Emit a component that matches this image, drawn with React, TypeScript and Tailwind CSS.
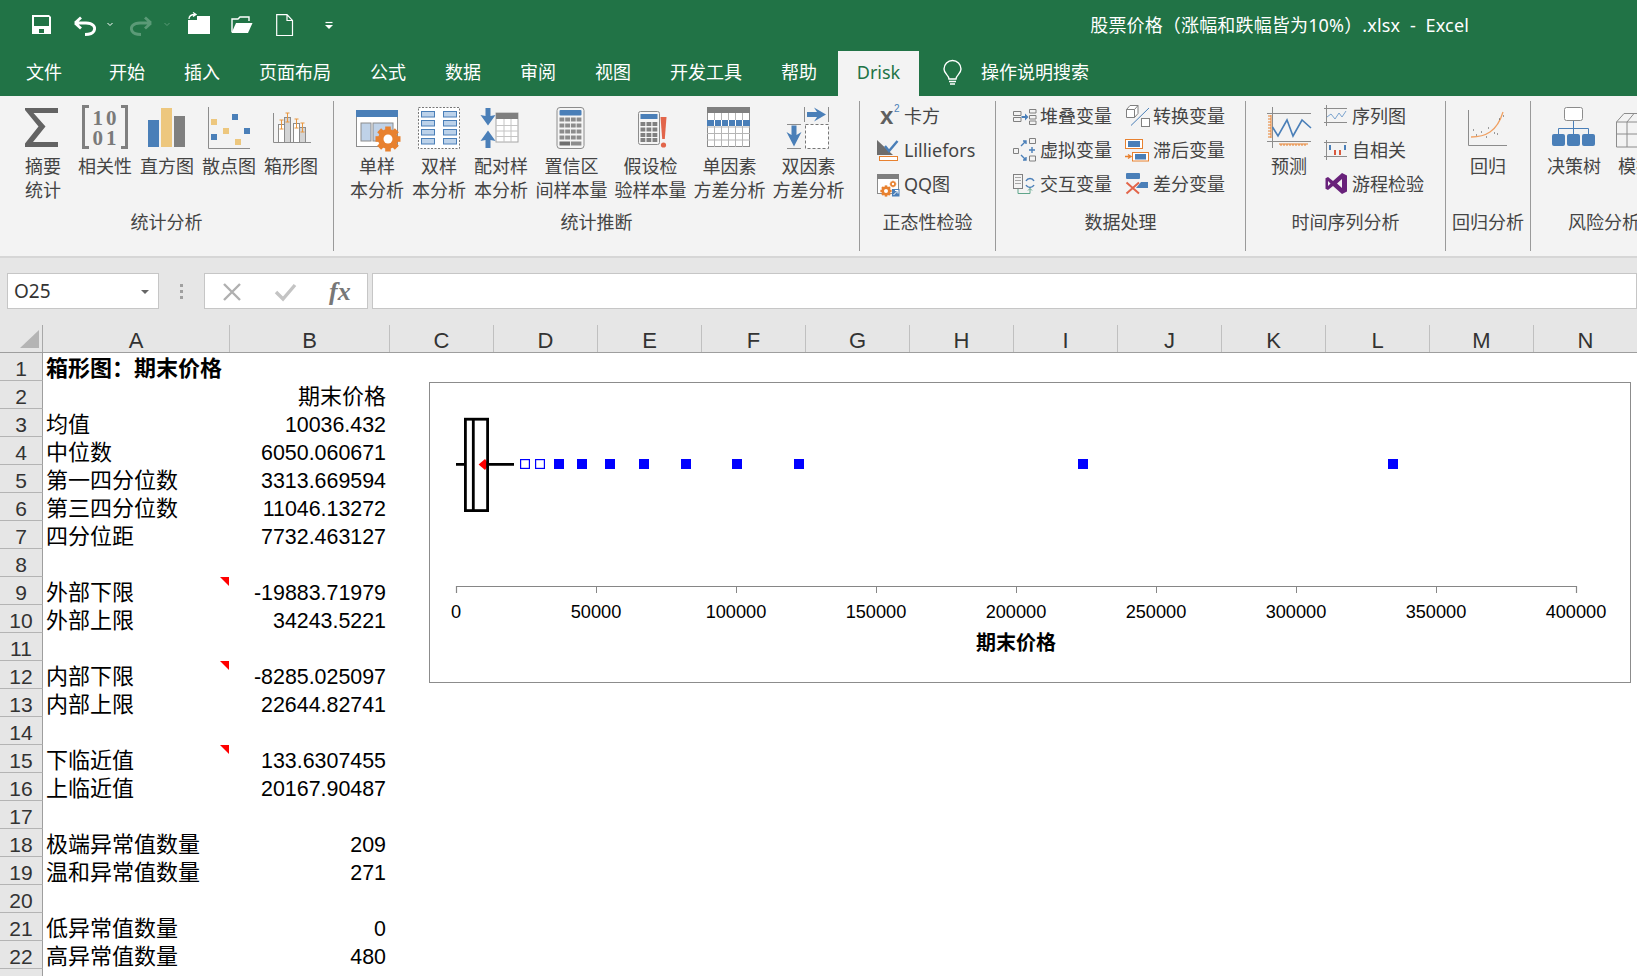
import type { ReactNode } from "react";

const BLUE = "#4a7fb8";
const GRAY = "#7f7f7f";
const ORANGE = "#e8812f";

// every icon is drawn in page pixels, the viewBox just cuts out its own slot
const Ico = ({ x, y, w, h, children }: { x: number; y: number; w: number; h: number; children?: ReactNode }) => (
  <svg width={w} height={h} viewBox={`${x} ${y} ${w} ${h}`} className="flex-none block overflow-hidden">
    {children}
  </svg>
);

const Gear = ({ cx, cy, r }: { cx: number; cy: number; r: number }) => (
  <g>
    {[0, 45, 90, 135, 180, 225, 270, 315].map((a) => (
      <rect key={a} x={cx - r * 0.28} y={cy - r * 1.25} width={r * 0.56} height={r * 0.6} fill={ORANGE} transform={`rotate(${a} ${cx} ${cy})`} />
    ))}
    <circle cx={cx} cy={cy} r={r} fill={ORANGE} />
    <circle cx={cx} cy={cy} r={r * 0.45} fill="#fff" />
  </g>
);

const Big = ({ x, w, cls, lines, children }: { x: number; w: number; cls: string; lines: string[]; children?: ReactNode }) => (
  <div className={`flex flex-col items-center flex-none ${cls}`}>
    <Ico x={x} y={96} w={w} h={58}>{children}</Ico>
    {lines.map((l) => (
      <div key={l} className="h-[24px] leading-[24px] text-[18px] whitespace-nowrap text-[#444]">{l}</div>
    ))}
  </div>
);

const Small = ({ x, y, w = 32, label, children }: { x: number; y: number; w?: number; label: string; children?: ReactNode }) => (
  <div className="flex items-center h-[34px]">
    <Ico x={x} y={y} w={w} h={34}>{children}</Ico>
    <span className="text-[18px] leading-[32px] mb-[2px] whitespace-nowrap text-[#444]">{label}</span>
  </div>
);

const Sep = () => <div className="flex-none w-[1px] h-[150px] mt-[5px] bg-[#9a9a9a]" />;

const GroupLabel = ({ text }: { text: string }) => (
  <div className="absolute left-0 right-0 top-[110px] h-[32px] leading-[32px] text-center text-[18px] whitespace-nowrap text-[#444]">{text}</div>
);

const tabs = ["开始", "插入", "页面布局", "公式", "数据", "审阅", "视图", "开发工具", "帮助"];

const columns = ["C", "D", "E", "F", "G", "H", "I", "J", "K", "L", "M", "N"];

const rows: { a?: string; b?: string; bold?: boolean; note?: boolean }[] = [
  { a: "箱形图：期末价格", bold: true },
  { b: "期末价格" },
  { a: "均值", b: "10036.432" },
  { a: "中位数", b: "6050.060671" },
  { a: "第一四分位数", b: "3313.669594" },
  { a: "第三四分位数", b: "11046.13272" },
  { a: "四分位距", b: "7732.463127" },
  {},
  { a: "外部下限", b: "-19883.71979", note: true },
  { a: "外部上限", b: "34243.5221" },
  {},
  { a: "内部下限", b: "-8285.025097", note: true },
  { a: "内部上限", b: "22644.82741" },
  {},
  { a: "下临近值", b: "133.6307455", note: true },
  { a: "上临近值", b: "20167.90487" },
  {},
  { a: "极端异常值数量", b: "209" },
  { a: "温和异常值数量", b: "271" },
  {},
  { a: "低异常值数量", b: "0" },
  { a: "高异常值数量", b: "480" },
  {},
];

const hollow = [520, 535];
const filled = [554, 577, 605, 639, 681, 732, 794, 1078, 1388];
const ticks = [0, 50000, 100000, 150000, 200000, 250000, 300000, 350000, 400000];

const Chart = () => (
  <div className="absolute left-[429px] top-[57px] w-[1202px] h-[301px] border border-[#8c8c8c] bg-white">
    <svg width={1200} height={299} viewBox="430 383 1200 299" className="block font-['Liberation_Sans','Noto_Sans_CJK_SC',sans-serif]">
      <path d="M485 459 L478.6 464.5 L485 470 L489 464.5 Z" fill="#ff0000" />
      <path d="M456 464.3 H465 M488 464.3 H514" stroke="#000" strokeWidth={2.8} />
      <rect x={465.4} y={419.2} width={22.2} height={91.4} fill="none" stroke="#000" strokeWidth={2.8} />
      <path d="M473.3 419 V511" stroke="#000" strokeWidth={2.8} />
      {hollow.map((x) => (
        <rect key={x} x={x + 0.6} y={459.6} width={8.8} height={8.8} fill="#fff" stroke="#0000ff" strokeWidth={1.2} />
      ))}
      {filled.map((x) => (
        <rect key={x} x={x} y={459} width={10} height={10} fill="#0000ff" />
      ))}
      <path d="M456.5 593 V586.5 H1576.5 V593" fill="none" stroke="#868686" strokeWidth={1.2} />
      {ticks.map((t, i) => (
        <g key={t}>
          <path d={`M${456.5 + i * 140} 586 V593`} stroke="#868686" strokeWidth={1} />
          <text x={456 + i * 140} y={617.5} textAnchor="middle" fontSize={18.2} fill="#000">{t}</text>
        </g>
      ))}
      <text x={1016} y={650} textAnchor="middle" fontSize={20} fontWeight={700} fill="#000">期末价格</text>
    </svg>
  </div>
);

export default function App() {
  return (
    <div className="relative w-[1637px] h-[976px] overflow-hidden bg-white font-['Noto_Sans','Noto_Sans_CJK_SC',sans-serif]">
      {/* title bar */}
      <div className="flex items-center h-[51px] bg-[#217346] pl-[26px] pr-[168px] text-white">
        <Ico x={26} y={0} w={40} h={51}>
          <path fillRule="evenodd" d="M32 15 H49 L51 17 V34 H32 Z M34 17 V26 H49 V17 Z M39 29 V33 H44 V29 Z" fill="#fff" />
        </Ico>
        <Ico x={66} y={0} w={36} h={51}>
          <path d="M75 23 L81 17.5 M75 23 L81 28.5 M75 23 H86 C93 23 96 27 94 31 C93 33 90 34.5 85 34.5" fill="none" stroke="#fff" strokeWidth={2.8} />
        </Ico>
        <Ico x={102} y={0} w={22} h={51}>
          <path d="M107.5 23 L110 25.5 L112.5 23" fill="none" stroke="#fff" strokeWidth={1} />
        </Ico>
        <Ico x={124} y={0} w={34} h={51}>
          <path d="M151 23 L145 17.5 M151 23 L145 28.5 M151 23 H140 C133 23 130 27 132 31 C133 33 136 34.5 141 34.5" fill="none" stroke="#5b9a77" strokeWidth={2.8} />
        </Ico>
        <Ico x={158} y={0} w={24} h={51}>
          <path d="M164.5 23 L167 25.5 L169.5 23" fill="none" stroke="#5b9a77" strokeWidth={1} />
        </Ico>
        <Ico x={182} y={0} w={44} h={51}>
          <path d="M188 20 H197 V16 H210 V34 H188 Z" fill="#fff" />
          <path d="M189 19 C189 15.5 191 14.5 195 14.5 M193 12.5 L196 14.5 L193 16.5" fill="none" stroke="#fff" strokeWidth={1.3} />
        </Ico>
        <Ico x={226} y={0} w={44} h={51}>
          <path d="M232 32 V19 H238 L240 17 H249 V21" fill="none" stroke="#fff" strokeWidth={1.4} />
          <path d="M236 23 H252.5 L248 33 H231.5 Z" fill="#fff" />
        </Ico>
        <Ico x={270} y={0} w={50} h={51}>
          <path d="M276.7 14.7 H287 L292.5 20.5 V35.5 H276.7 Z M287 14.7 V20.5 H292.5" fill="none" stroke="#fff" strokeWidth={1.2} />
        </Ico>
        <Ico x={320} y={0} w={20} h={51}>
          <path d="M325.5 22.5 H332.5" stroke="#fff" strokeWidth={1.2} />
          <path d="M325 25 H333 L329 29 Z" fill="#fff" />
        </Ico>
        <div className="ml-auto text-[18px] tracking-[0.16px] whitespace-nowrap">股票价格（涨幅和跌幅皆为10%）.xlsx&nbsp; -&nbsp; Excel</div>
      </div>

      {/* tabs */}
      <div className="flex items-center h-[45px] bg-[#217346] pl-[26px] text-[18px] text-white">
        <span className="mr-[47px] -mt-[2px]">文件</span>
        <div className="flex gap-[39px] -mt-[2px]">
          {tabs.map((t) => (
            <span key={t} className="whitespace-nowrap">{t}</span>
          ))}
        </div>
        <div className="ml-[21px] flex items-center justify-center w-[81px] h-[45px] pb-[2px] bg-[#f3f3f3] text-[#217346]">Drisk</div>
        <div className="ml-[17px]">
          <Ico x={936} y={51} w={45} h={45}>
            <path d="M949 79 C949 75 944 74 944 69 A8.5 8.5 0 0 1 961 69 C961 74 956 75 956 79 Z M949 81.5 H956 M950 84 H955" fill="none" stroke="#fff" strokeWidth={1.4} />
          </Ico>
        </div>
        <span className="-mt-[2px] whitespace-nowrap">操作说明搜索</span>
      </div>

      {/* ribbon */}
      <div className="flex h-[162px] bg-[#f3f3f3] border-b-2 border-[#d6d6d6] overflow-hidden">
        <div className="relative flex flex-none w-[333px] pl-[12px]">
          <Big x={12} w={62} cls="w-[62px]" lines={["摘要", "统计"]}>
            <path d="M25 108 H58 V113 H33.5 L45.5 126.5 L33 142 H58 V147 H25 V143.5 L38.5 126.5 L25 110 Z" fill="#636363" />
          </Big>
          <Big x={74} w={62} cls="w-[62px]" lines={["相关性"]}>
            <path d="M89 106.5 H83.5 V147.5 H89 M121 106.5 H126.5 V147.5 H121" fill="none" stroke={GRAY} strokeWidth={3} />
            <text x={106} y={125} textAnchor="middle" fontSize={21} fontWeight={700} fill="#7a7a7a" className="font-['Liberation_Serif',serif]" letterSpacing={3}>10</text>
            <text x={106} y={145} textAnchor="middle" fontSize={21} fontWeight={700} fill="#7a7a7a" className="font-['Liberation_Serif',serif]" letterSpacing={3}>01</text>
          </Big>
          <Big x={136} w={62} cls="w-[62px]" lines={["直方图"]}>
            <rect x={148} y={120} width={11} height={27} fill={BLUE} />
            <rect x={161} y={108} width={11} height={39} fill="#edc77e" />
            <rect x={174} y={116} width={11} height={31} fill={GRAY} />
          </Big>
          <Big x={198} w={62} cls="w-[62px]" lines={["散点图"]}>
            <path d="M208.5 107 V148.5 H250" fill="none" stroke="#8c8c8c" />
            <rect x={211} y={119} width={6} height={6} fill="#edc77e" />
            <rect x={232} y={114} width={6} height={6} fill={BLUE} />
            <rect x={223} y={128} width={6} height={6} fill="#edc77e" />
            <rect x={244} y={128} width={6} height={6} fill={BLUE} />
            <rect x={211} y={134} width={6} height={6} fill={BLUE} />
            <rect x={235} y={139} width={6} height={6} fill="#edc77e" />
          </Big>
          <Big x={260} w={62} cls="w-[62px]" lines={["箱形图"]}>
            <path d="M273.5 113 V142.5 H311" fill="none" stroke="#8c8c8c" />
            <rect x={278.5} y={124.5} width={6} height={18} fill="#fff" stroke="#8c8c8c" />
            <rect x={284.5} y={117.5} width={6} height={25} fill="#d4d4d4" stroke="#8c8c8c" />
            <rect x={293.5} y={123.5} width={6} height={19} fill="#fff" stroke="#8c8c8c" />
            <rect x={299.5} y={127.5} width={6} height={15} fill="#d4d4d4" stroke="#8c8c8c" />
            <path d="M281.5 120 V129 M279.5 120 H283.5 M279.5 129 H283.5 M287.5 113 V122 M285.5 113 H289.5 M285.5 122 H289.5 M296.5 119 V128 M294.5 119 H298.5 M294.5 128 H298.5 M302.5 123 V132 M300.5 123 H304.5 M300.5 132 H304.5" fill="none" stroke="#e8963f" />
          </Big>
          <GroupLabel text="统计分析" />
        </div>
        <Sep />

        <div className="relative flex flex-none w-[525px] pl-[12px]">
          <Big x={346} w={62} cls="w-[62px]" lines={["单样", "本分析"]}>
            <rect x={356.5} y={110.5} width={41} height={36} fill="#fff" stroke="#8c8c8c" />
            <rect x={356} y={110} width={42} height={7} fill={BLUE} />
            <rect x={361} y={123} width={10} height={18} fill="#bfd2e8" stroke="#8c8c8c" />
            <rect x={373} y={123} width={20} height={18} fill="#bfd2e8" stroke="#8c8c8c" />
            <Gear cx={388} cy={139} r={10} />
          </Big>
          <Big x={408} w={62} cls="w-[62px]" lines={["双样", "本分析"]}>
            <rect x={418.5} y={107.5} width={41} height={41} fill="#fff" stroke="#777" strokeDasharray="2 1.5" />
            {[111, 120, 129, 138].map((y) => (
              <g key={y}>
                <rect x={421.5} y={y + 0.5} width={13} height={5.5} fill="#bcd2ea" stroke={BLUE} />
                <rect x={443.5} y={y + 0.5} width={13} height={5.5} fill="#bcd2ea" stroke={BLUE} />
              </g>
            ))}
          </Big>
          <Big x={470} w={62} cls="w-[62px]" lines={["配对样", "本分析"]}>
            <rect x={496} y={113} width={22} height={29} fill="#fff" stroke="#a6a6a6" />
            <rect x={496} y={113} width={22} height={6} fill={GRAY} />
            <path d="M496 125.5 H518 M496 131 H518 M496 136.5 H518 M504 119 V142 M511 119 V142" stroke="#c4c4c4" />
            <path d="M485.5 108 H490.5 V116 L495.5 115 L488 125.5 L480.5 115 L485.5 116 Z M485.5 148 H490.5 V140 L495.5 141 L488 130.5 L480.5 141 L485.5 140 Z" fill={BLUE} />
          </Big>
          <Big x={532} w={79} cls="w-[79px]" lines={["置信区", "间样本量"]}>
            <rect x={557} y={107.5} width={27} height={41} rx={3} fill="#f5f5f5" stroke="#8c8c8c" />
            <rect x={559.5} y={110} width={22} height={5.5} rx={1} fill={BLUE} />
            {[117.5, 123.5, 129.5, 135.5].map((y) =>
              [559.5, 565.2, 570.9, 576.6].map((x) => <rect key={`${x}-${y}`} x={x} y={y} width={4.8} height={4} fill="#8c8c8c" />)
            )}
            <rect x={559.5} y={141.5} width={10.5} height={4} fill="#6f6f6f" />
            <rect x={570.9} y={141.5} width={10.5} height={4} fill="#8c8c8c" />
          </Big>
          <Big x={611} w={79} cls="w-[79px]" lines={["假设检", "验样本量"]}>
            <rect x={638.5} y={111.5} width={21} height={33} rx={2} fill="#f5f5f5" stroke="#8c8c8c" />
            <rect x={640.5} y={114} width={17} height={5} fill={BLUE} />
            {[122, 127.5, 133, 138].map((y) =>
              [640.5, 646.5, 652.5].map((x) => <rect key={`${x}-${y}`} x={x} y={y} width={4.8} height={4} fill="#808080" />)
            )}
            <path d="M660.5 117 H666.5 L664.8 139 H662.2 Z" fill="#e2654a" />
            <circle cx={663.5} cy={145} r={2.6} fill="#e2654a" />
          </Big>
          <Big x={690} w={79} cls="w-[79px]" lines={["单因素", "方差分析"]}>
            <rect x={707.5} y={107.5} width={42} height={39} fill="#fff" stroke="#8c8c8c" />
            <path d="M707 127 H750 M707 133.5 H750 M707 140 H750 M714.5 107 V147 M721.5 107 V147 M728.5 107 V147 M735.5 107 V147 M742.5 107 V147" stroke="#b5b5b5" />
            <rect x={707} y={120} width={43} height={6} fill={BLUE} />
            <path d="M714.5 120 V126 M721.5 120 V126 M728.5 120 V126 M735.5 120 V126 M742.5 120 V126" stroke="#fff" />
            <rect x={707} y={107} width={43} height={6} fill={GRAY} />
          </Big>
          <Big x={769} w={79} cls="w-[79px]" lines={["双因素", "方差分析"]}>
            <path d="M804.5 107 V122 M828.5 107 V122 M787 124.5 H801 M787 148.5 H801" stroke="#8c8c8c" />
            <path d="M807 112 H817 L814 107.5 L826 114.5 L814 121.5 L817 117 H807 Z" fill={BLUE} />
            <path d="M791.5 125.5 H796.5 V135 L801.5 132 L794 146.5 L786.5 132 L791.5 135 Z" fill={BLUE} />
            <rect x={805.5} y={124.5} width={23} height={24} fill="#fff" stroke="#777" strokeDasharray="3 2" />
          </Big>
          <GroupLabel text="统计推断" />
        </div>
        <Sep />

        <div className="relative flex flex-col flex-none w-[135px] pt-[4px] pl-[13px]">
          <Small x={873} y={100} w={31} label="卡方">
            <text x={880} y={124} fontSize={24} fontWeight={700} fill="#5f5f5f" className="font-['Liberation_Sans',sans-serif]">x</text>
            <text x={894} y={112} fontSize={10} fill={BLUE} className="font-['Liberation_Sans',sans-serif]">2</text>
          </Small>
          <Small x={873} y={134} w={31} label="Lilliefors">
            <path d="M877 140 V155 H893 Z" fill="#6d6d6d" />
            <path d="M885 146 L889 151 L897.5 141" fill="none" stroke={BLUE} strokeWidth={2.4} />
            <rect x={879.5} y={156.5} width={18} height={4} fill="#fff" stroke={ORANGE} />
          </Small>
          <Small x={873} y={168} w={31} label="QQ图">
            <rect x={877.5} y={174.5} width={21} height={19} fill="#fff" stroke="#8c8c8c" />
            <rect x={877} y={174} width={22} height={5} fill={GRAY} />
            <Gear cx={886} cy={191} r={4.5} />
            <Gear cx={893} cy={184} r={2.6} />
            <rect x={892} y={189} width={7.5} height={7.5} fill={BLUE} />
            <path d="M893.5 195 L898 190.5 M895 190.5 H898 V193.5" fill="none" stroke="#fff" />
          </Small>
          <GroupLabel text="正态性检验" />
        </div>
        <Sep />

        <div className="relative flex flex-none w-[249px] pt-[4px] pl-[12px]">
          <div className="flex flex-col">
            <Small x={1008} y={100} label="堆叠变量">
              <path d="M1013.5 111.5 H1021 V115.5 H1013.5 Z M1013.5 117.5 H1021 V121.5 H1013.5 Z M1029.5 109.5 H1036 V113 H1029.5 Z M1029.5 115.5 H1036 V119 H1029.5 Z M1029.5 121 H1036 V124.5 H1029.5 Z" fill="none" stroke="#808080" />
              <path d="M1021.5 116 H1025 V113.5 L1028.5 117 L1025 120.5 V118 H1021.5 Z" fill={BLUE} />
            </Small>
            <Small x={1008} y={134} label="虚拟变量">
              <path d="M1013.5 148.5 H1018.5 V153.5 H1013.5 Z M1029.5 138.5 H1035.5 V143.5 H1029.5 Z M1029.5 156 H1035.5 V161 H1029.5 Z" fill="none" stroke="#808080" />
              <path d="M1021 146 L1026 141 M1023 141 H1026 V144 M1021 155 L1026 160 M1023 160 H1026 V157 M1029 150 H1035 M1032 147 V153" fill="none" stroke={BLUE} strokeWidth={1.4} />
            </Small>
            <Small x={1008} y={168} label="交互变量">
              <rect x={1013.5} y={174.5} width={9} height={14} fill="#f3f3f3" stroke="#808080" />
              <path d="M1015 177.5 H1021 M1015 180.5 H1021 M1015 183.5 H1021" stroke="#a6a6a6" />
              <path d="M1026 181 A4.5 4.5 0 0 1 1034 181 M1034 185 A4.5 4.5 0 0 1 1026 185" fill="none" stroke={BLUE} strokeWidth={1.5} />
              <path d="M1018 189 V193.5 H1030 V188.5 M1028 190.5 L1030 188.5 L1032 190.5" fill="none" stroke="#5fa58a" />
            </Small>
          </div>
          <div className="flex flex-col ml-[9px]">
            <Small x={1121} y={100} label="转换变量">
              <path d="M1126.5 109.5 H1134.5 V117.5 H1126.5 Z M1126.5 109.5 L1130 105.5 H1138 V113.5 L1134.5 117.5 M1134.5 109.5 L1138 105.5" fill="#fff" stroke="#808080" />
              <path d="M1149 108 L1131 125.5" stroke={BLUE} />
              <rect x={1141.5} y={118.5} width={8} height={8} fill="#fff" stroke="#808080" />
            </Small>
            <Small x={1121} y={134} label="滞后变量">
              <rect x={1125.5} y={139.5} width={17} height={9} fill="#fff" stroke={ORANGE} />
              <rect x={1128} y={141} width={12} height={6} fill={BLUE} />
              <rect x={1132.5} y={152.5} width={16} height={8.5} fill="#fff" stroke={ORANGE} />
              <rect x={1135} y={154} width={11} height={5.5} fill={BLUE} />
              <path d="M1125 156.5 H1130 M1128 154.5 L1131 156.5 L1128 158.5" fill="none" stroke={ORANGE} strokeWidth={1.4} />
            </Small>
            <Small x={1121} y={168} label="差分变量">
              <rect x={1126} y={173} width={14} height={6} rx={1} fill={BLUE} />
              <path d="M1141 182 H1148 V188 H1136 Z" fill={BLUE} />
              <path d="M1126.5 182.5 L1139 193.5 M1139 182.5 L1126.5 193.5" stroke="#e2654a" strokeWidth={2} />
            </Small>
          </div>
          <GroupLabel text="数据处理" />
        </div>
        <Sep />

        <div className="relative flex flex-none w-[199px] pl-[12px]">
          <Big x={1258} w={62} cls="w-[62px]" lines={["预测"]}>
            <path d="M1267 113.5 H1311 M1267 141.5 H1311 M1272.5 107 V148" fill="none" stroke="#8c8c8c" />
            <path d="M1272.5 127 L1278 136 L1287 120 L1293 136 L1302 120 L1311 128" fill="none" stroke={BLUE} strokeWidth={1.6} />
            <path d="M1271 115 V138 M1268 116 H1271 M1268 119 H1271 M1268 122 H1271 M1268 125 H1271 M1268 128 H1271 M1268 131 H1271 M1268 134 H1271 M1268 137 H1271" fill="none" stroke={ORANGE} />
            <path d="M1279 144 H1308 M1281 144 V146 M1284 144 V146 M1287 144 V146 M1290 144 V146 M1293 144 V146 M1296 144 V146 M1299 144 V146 M1302 144 V146 M1305 144 V146" fill="none" stroke={ORANGE} />
          </Big>
          <div className="flex flex-col pt-[4px]">
            <Small x={1320} y={100} label="序列图">
              <path d="M1324 108.5 H1347 M1324 122.5 H1347 M1326.5 105 V126" fill="none" stroke="#8c8c8c" />
              <path d="M1327 117 L1331 114 L1335 119 L1339 113 L1342 117 L1346 111" fill="none" stroke="#7ba4cf" />
            </Small>
            <Small x={1320} y={134} label="自相关">
              <path d="M1324 142.5 H1347 M1324 156.5 H1347 M1326.5 140 V160" fill="none" stroke="#8c8c8c" />
              <rect x={1329} y={145} width={2} height={5} fill={BLUE} />
              <rect x={1334} y={150} width={2} height={5} fill="#d9593d" />
              <rect x={1339} y={150} width={2} height={5} fill="#d9593d" />
              <rect x={1344} y={145} width={2} height={5} fill={BLUE} />
            </Small>
            <Small x={1320} y={168} label="游程检验">
              <path fillRule="evenodd" d="M1342 173 L1347 175.5 V191.5 L1342 194 L1333 186 L1328 190 L1325.5 188.7 V178.3 L1328 177 L1333 181 Z M1342 179 L1337 183.5 L1342 188 Z M1328 181 V186 L1330.5 183.5 Z" fill="#68217a" />
            </Small>
          </div>
          <GroupLabel text="时间序列分析" />
        </div>
        <Sep />

        <div className="relative flex flex-none w-[84px] pl-[11px]">
          <Big x={1457} w={62} cls="w-[62px]" lines={["回归"]}>
            <path d="M1468.5 110 V145.5 H1507" fill="none" stroke="#8c8c8c" />
            <path d="M1471 137 C1485 137 1497 132 1503 112" fill="none" stroke="#f0a163" strokeWidth={1.3} />
            <path d="M1473 130 h1 M1476 135 h1 M1481 132 h1 M1488 128 h1 M1486 137 h1 M1497 134 h1 M1499 119 h1 M1503 116 h1 M1494 133 h1" stroke="#444" />
          </Big>
          <GroupLabel text="回归分析" />
        </div>
        <Sep />

        <div className="relative flex flex-none w-[146px] pl-[12px]">
          <Big x={1543} w={62} cls="w-[62px]" lines={["决策树"]}>
            <rect x={1564.5} y={107.5} width={18} height={13} rx={2} fill="#fff" stroke="#8c8c8c" />
            <path d="M1573.5 121 V128.5 M1558.5 134 V128.5 H1588.5 V134 M1573.5 128.5 V134" fill="none" stroke={BLUE} />
            <rect x={1552} y={134} width={13} height={12} rx={2} fill={BLUE} />
            <rect x={1567} y={134} width={13} height={12} rx={2} fill={BLUE} />
            <rect x={1582} y={134} width={13} height={12} rx={2} fill={BLUE} />
          </Big>
          <Big x={1605} w={62} cls="w-[62px]" lines={["模拟"]}>
            <path d="M1616.5 122 L1624 113.5 H1650 M1616.5 122 V147 H1650 M1616.5 122 H1650 M1616.5 134 H1650 M1627 122 V147 M1627 122 L1634 113.5" fill="none" stroke="#8c8c8c" />
          </Big>
          <GroupLabel text="风险分析" />
        </div>
      </div>

      {/* formula bar */}
      <div className="flex h-[67px] pt-[15px] bg-[#e6e6e6] items-start">
        <div className="flex items-center justify-between w-[152px] h-[36px] ml-[7px] px-[6px] pt-[1px] bg-white border border-[#c6c6c6] text-[19px] text-[#333]">
          <span>O25</span>
          <svg width={14} height={8} viewBox="0 0 14 8"><path d="M3 2 H11 L7 6 Z" fill="#666" /></svg>
        </div>
        <div className="flex flex-col justify-center gap-[3px] w-[45px] h-[36px] items-center">
          <span className="w-[3px] h-[3px] bg-[#a0a0a0]" />
          <span className="w-[3px] h-[3px] bg-[#a0a0a0]" />
          <span className="w-[3px] h-[3px] bg-[#a0a0a0]" />
        </div>
        <div className="flex items-center w-[164px] h-[36px] bg-white border border-[#c6c6c6]">
          <svg width={54} height={24} viewBox="0 0 54 24" className="flex-none">
            <path d="M19 5 L35 21 M35 5 L19 21" stroke="#b0b0b0" strokeWidth={2.4} />
          </svg>
          <svg width={54} height={24} viewBox="0 0 54 24" className="flex-none">
            <path d="M17 13 L24 20 L36 6" fill="none" stroke="#c4c4c4" strokeWidth={3.4} />
          </svg>
          <span className="font-['Liberation_Serif',serif] italic font-bold text-[26px] text-[#777] ml-[16px]">fx</span>
        </div>
        <div className="flex-1 h-[36px] ml-[4px] bg-white border border-[#c6c6c6]" />
      </div>

      {/* sheet */}
      <div className="relative font-['Liberation_Sans','Noto_Sans_CJK_SC',sans-serif] text-black">
        <div className="flex h-[28px] bg-[#e6e6e6] border-b border-[#9e9e9e] text-[22px] text-[#333]">
          <div className="flex-none w-[43px] border-r border-[#a8a8a8] relative">
            <svg width={22} height={22} viewBox="0 0 22 22" className="absolute left-[19px] top-[4px]"><path d="M1 19 L20 1 V19 Z" fill="#b4b4b4" /></svg>
          </div>
          <div className="flex-none w-[187px] text-center border-r border-[#c0c0c0] leading-[32px]">A</div>
          <div className="flex-none w-[160px] text-center border-r border-[#c0c0c0] leading-[32px]">B</div>
          {columns.map((c) => (
            <div key={c} className="flex-none w-[104px] text-center border-r border-[#c0c0c0] leading-[32px]">{c}</div>
          ))}
        </div>
        {rows.map((r, i) => (
          <div key={i} className="flex h-[28px]">
            <div className="flex-none w-[43px] bg-[#e6e6e6] border-r border-b border-r-[#9e9e9e] border-b-[#b4b4b4] text-center text-[21px] leading-[31px] text-[#333]">{i < 22 ? i + 1 : ""}</div>
            <div className={`relative flex-none w-[186px] pl-[3px] text-[22px] leading-[31px] whitespace-nowrap ${r.bold ? "font-bold" : ""}`}>
              {r.a}
              {r.note && <div className="absolute right-0 top-0 w-[9px] h-[9px] bg-[#ff0000] [clip-path:polygon(0_0,100%_0,100%_100%)]" />}
            </div>
            <div className={`flex-none w-[157px] text-right whitespace-nowrap ${r.a ? "text-[21.4px] leading-[33px]" : "text-[22px] leading-[31px]"}`}>{r.b}</div>
          </div>
        ))}
        <Chart />
      </div>
    </div>
  );
}
